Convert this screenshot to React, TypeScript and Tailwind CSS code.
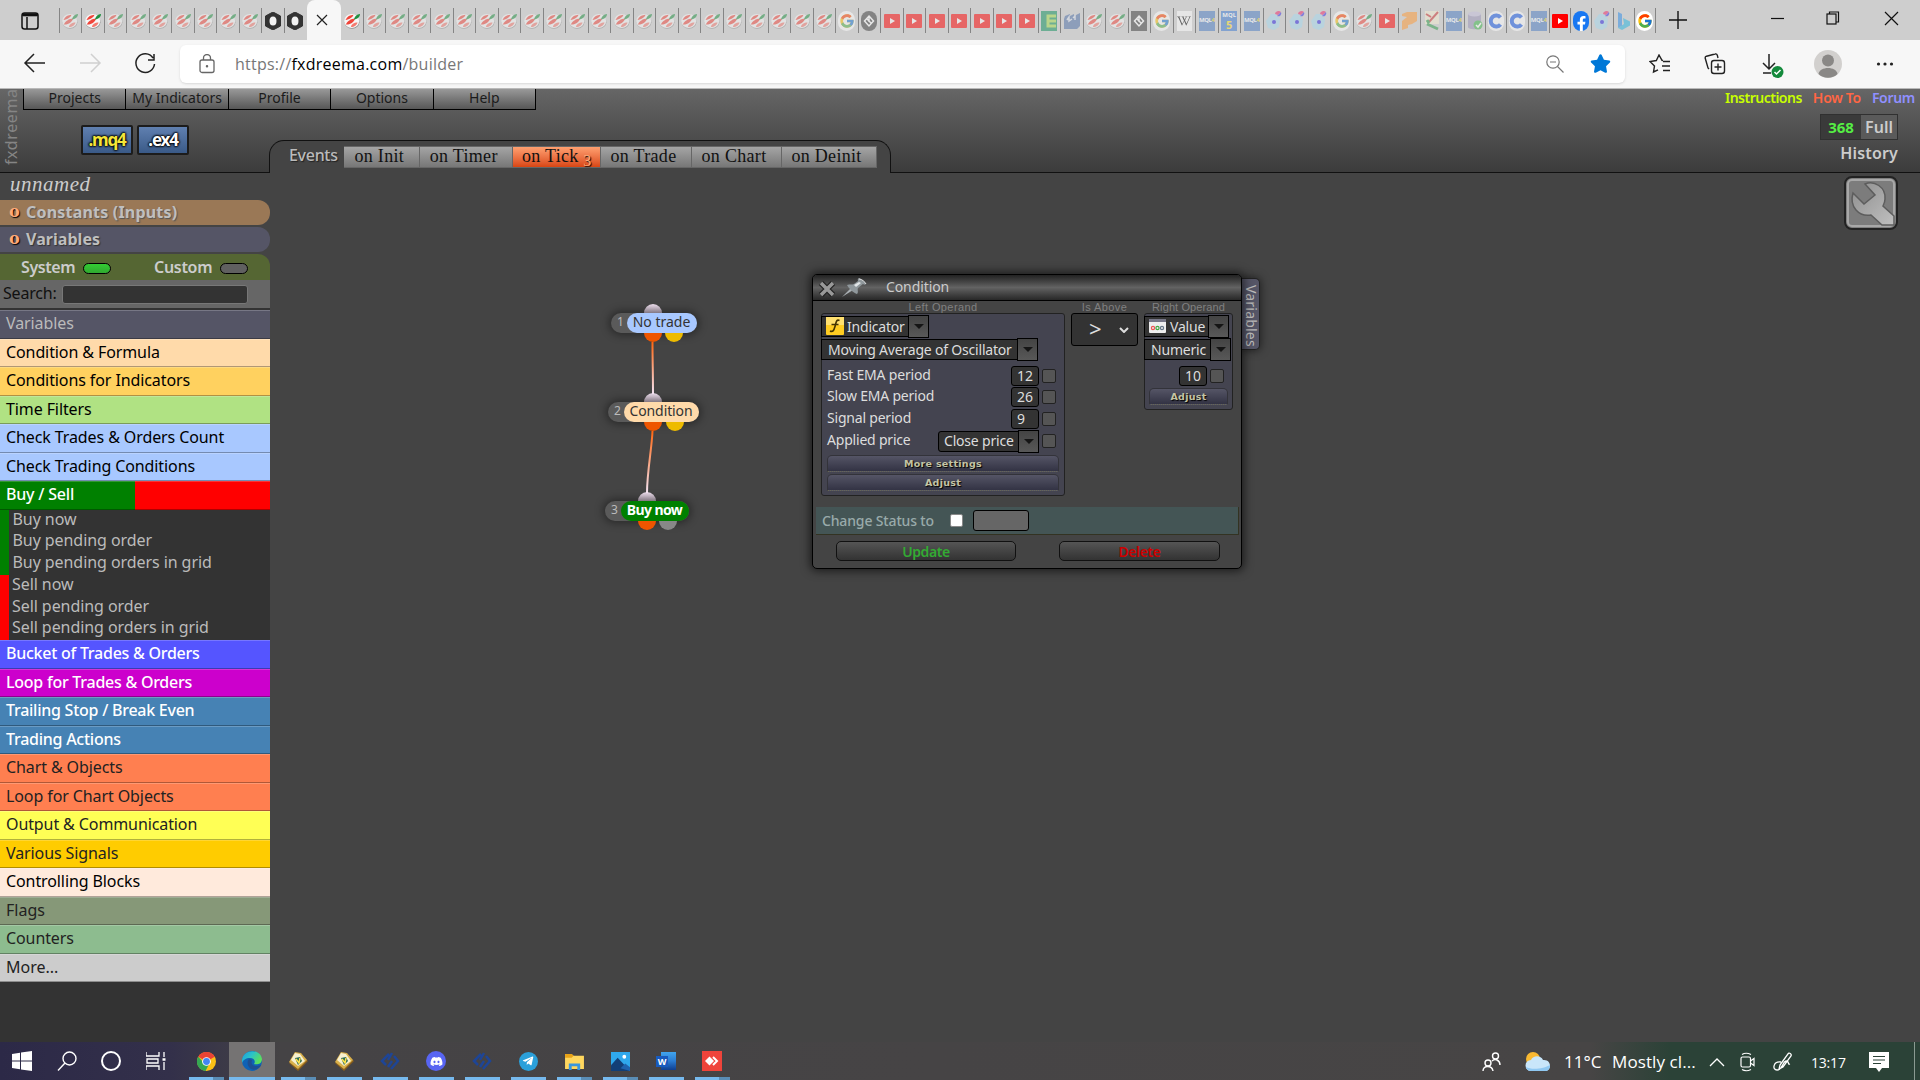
import { useState } from 'react';
import type { ReactNode } from 'react';
import clsx from 'clsx';
import { FcGoogle } from 'react-icons/fc';
import { FaDiscord, FaFacebookF, FaStar, FaTelegramPlane, FaWikipediaW } from 'react-icons/fa';

const rows = [
  { label: 'Variables', cls: 'bg-[#555566] text-[#bbbbbb]' },
  { label: 'Condition & Formula', cls: 'bg-[#ffdaaa] text-black' },
  { label: 'Conditions for Indicators', cls: 'bg-[#ffd15f] text-black' },
  { label: 'Time Filters', cls: 'bg-[#b0e283] text-black' },
  { label: 'Check Trades & Orders Count', cls: 'bg-[#a8c8ff] text-black' },
  { label: 'Check Trading Conditions', cls: 'bg-[#a8c8ff] text-black' },
];

const moreRows = [
  { label: 'Bucket of Trades & Orders', cls: 'bg-[#5555ff] text-white font-medium tracking-[-0.25px]' },
  { label: 'Loop for Trades & Orders', cls: 'bg-[#cc00cc] text-white font-medium tracking-[-0.25px]' },
  { label: 'Trailing Stop / Break Even', cls: 'bg-[#4682b4] text-white font-medium tracking-[-0.25px]' },
  { label: 'Trading Actions', cls: 'bg-[#4682b4] text-white font-medium tracking-[-0.25px]' },
  { label: 'Chart & Objects', cls: 'bg-[#ff7f50] text-[#222222] tracking-[-0.1px]' },
  { label: 'Loop for Chart Objects', cls: 'bg-[#ff7f50] text-[#222222] tracking-[-0.1px]' },
  { label: 'Output & Communication', cls: 'bg-[#ffff55] text-[#222222] tracking-[-0.1px]' },
  { label: 'Various Signals', cls: 'bg-[#ffcc00] text-[#222222] tracking-[-0.1px]' },
  { label: 'Controlling Blocks', cls: 'bg-[#ffeadc] text-black tracking-[-0.1px]' },
  { label: 'Flags', cls: 'bg-[#869878] text-[#222222]' },
  { label: 'Counters', cls: 'bg-[#8dbc8f] text-[#222222] tracking-[-0.1px]' },
  { label: 'More...', cls: 'bg-[#cccccc] text-[#222222]' },
];

const buyItems = ['Buy now', 'Buy pending order', 'Buy pending orders in grid'];
const sellItems = ['Sell now', 'Sell pending order', 'Sell pending orders in grid'];

const events = [
  { label: 'on Init', w: 'w-[75.5px]' },
  { label: 'on Timer', w: 'w-[93.5px]' },
  { label: 'on Tick', w: 'w-[87.5px]', count: 3 },
  { label: 'on Trade', w: 'w-[91px]' },
  { label: 'on Chart', w: 'w-[90px]' },
  { label: 'on Deinit', w: 'w-[95px]' },
];

// favicons of the open tabs; a trailing ! means the tab is awake
const leftTabs = 'fx fx! fx fx fx fx fx fx fx hex! hex!'.split(' ');
const midTabs = (
  'fx fx fx fx fx fx fx fx fx fx fx fx fx fx fx fx fx fx fx fx fx google circle yt yt yt yt yt yt yt e m fx fx square google ' +
  'wiki mql mql5 mql dot dot dot google fx yt arrow tools'
).split(' ');
const rightTabs = 'mql db c c mql yt! fb! dot bing google!'.split(' ');

function Favicon({ kind }: { kind: string }) {
  switch (kind) {
    case 'fx':
      return (
        <svg viewBox="0 0 16 16" className="size-4">
          <ellipse cx="8" cy="9.200" rx="7.400" ry="6.600" fill="#8c8c8c" />
          <ellipse cx="7.700" cy="8" rx="7.500" ry="7" fill="#f6f6f6" />
          <path d="M1.500 7C3 3.500 6 2 9.500 1.800 9 4 5.500 6.500 1.500 7z" fill="#f0453a" />
          <path d="M1.800 11.500C3 8.500 7 5.500 11 5.500 10.500 9 6 12 1.800 11.500z" fill="#f0453a" />
          <path d="M7 14c0-2.500 3-4.500 6.500-4.500C13 12 10 14.200 7 14z" fill="#f47a70" />
          <path d="M10 6.500C10.500 3.500 13 1.200 16 1c0 2.500-2 5-6 5.500z" fill="#1f9040" />
        </svg>
      );
    case 'hex':
      return (
        <svg viewBox="0 0 16 18" className="h-[18px] w-4">
          <path d="M8 0l7.500 4v10L8 18 .5 14V4z" fill="#333" stroke="#333" />
          <ellipse cx="8" cy="9" rx="3.500" ry="4.500" fill="#f2f2f2" />
        </svg>
      );
    case 'google':
      return (
        <span className="flex h-5 w-[17px] items-center justify-center rounded-full bg-white">
          <FcGoogle className="size-4" />
        </span>
      );
    case 'circle':
    case 'square':
      return (
        <svg viewBox="0 0 16 20" className="h-5 w-4">
          <rect width="16" height="20" rx={kind === 'circle' ? 8 : 0} fill="#3a3a3a" />
          <path d="M8 5l4.500 5L8 15l-4.500-5zM6 8l4 4M8 6v5" fill="none" stroke="#fff" strokeWidth="1.5" />
        </svg>
      );
    case 'yt':
      return (
        <svg viewBox="0 0 16 14" className="h-3.5 w-4">
          <rect width="16" height="14" rx="1" fill="#f00" />
          <path d="M6 4l5 3-5 3z" fill="#fff" />
        </svg>
      );
    case 'e':
      return (
        <svg viewBox="0 0 16 20" className="h-5 w-4">
          <rect width="16" height="20" fill="#0f8f5b" />
          <path d="M15 5H7v10h8M7 10h8" fill="none" stroke="#a5dc4a" strokeWidth="3" />
        </svg>
      );
    case 'm':
      return (
        <svg viewBox="0 0 16 16" className="size-4">
          <path d="M1 3l5-2v2l4-2v2l6-3v13l-3 3H0V6z" fill="#4e6fa8" />
          <path d="M3 7l2-3v4l3-2M9 5l2-2v4" stroke="#d7deea" fill="none" strokeWidth="1.500" />
        </svg>
      );
    case 'wiki':
      return (
        <span className="flex h-5 w-[15px] items-center justify-center bg-white text-black">
          <FaWikipediaW className="size-[14px]" />
        </span>
      );
    case 'mql':
      return (
        <span className="flex h-5 w-4 items-center justify-center bg-[#4a7cc4] text-[6px] font-bold tracking-[-0.4px] text-white">
          MQL<span className="text-yellow-300">4</span>
        </span>
      );
    case 'mql5':
      return (
        <span className="flex h-5 w-4 flex-col items-center bg-[#3a78d0] text-[6px] leading-[8px] font-bold text-white">
          <span>MQL</span>
          <span className="text-[11px] leading-[12px] text-yellow-300">5</span>
        </span>
      );
    case 'dot':
      return (
        <svg viewBox="0 0 16 20" className="h-5 w-4">
          <path d="M5 3h5l4 5-1 8-5 3-6-2-2-7z" fill="#a6d8ee" />
          <path d="M9 3a3.500 3 0 0 1 6-2l-3 3z" fill="#f0286a" />
          <path d="M15 1a3 3 0 0 1-4 4z" fill="#3a30e8" />
          <circle cx="8" cy="11" r="2" fill="#2a20e0" />
        </svg>
      );
    case 'arrow':
      return (
        <svg viewBox="0 0 16 18" className="h-[18px] w-4">
          <path d="M1 2L6 0h10v9l-5 3-4 1v3l-6 2V9l5-4-5-1z" fill="#ff9a35" />
        </svg>
      );
    case 'tools':
      return (
        <svg viewBox="0 0 16 20" className="h-5 w-4">
          <rect x="1" width="14" height="13" fill="#f4ecd0" />
          <path d="M2 3l5 3M14 1L5 11" stroke="#c33" strokeWidth="2" />
          <path d="M3 9l2 3M3 13l11 5" stroke="#2d9a48" strokeWidth="3" />
        </svg>
      );
    case 'db':
      return (
        <svg viewBox="0 0 16 20" className="h-5 w-4">
          <path d="M1 3v13c0 3 13 3 13 0V3z" fill="#9a94b8" />
          <ellipse cx="7.500" cy="3" rx="6.500" ry="2.500" fill="#c5c0dc" />
          <circle cx="11" cy="14" r="4.500" fill="#3db54a" />
          <path d="M9 14l2 2 3-4" stroke="#fff" fill="none" strokeWidth="1.500" />
        </svg>
      );
    case 'c':
      return (
        <svg viewBox="0 0 16 20" className="h-5 w-4">
          <rect width="16" height="20" rx="8" fill="#fff" />
          <path d="M12.500 6.500a5.500 5.500 0 1 0 0 7" fill="none" stroke="#1458e8" strokeWidth="4" />
        </svg>
      );
    case 'fb':
      return (
        <span className="flex h-5 w-4 items-end justify-center rounded-full bg-[#1877f2] text-white">
          <FaFacebookF className="size-[15px]" />
        </span>
      );
    default:
      return (
        <svg viewBox="0 0 16 20" className="h-5 w-4">
          <path d="M2 1l4 2v12l-4 2z" fill="#2a8be8" />
          <path d="M7 7l7 3.500v4L6 19l-4-2 6-4z" fill="#27b5e0" />
        </svg>
      );
  }
}

function TabIcon({ name, width }: { name: string; width: string }) {
  const awake = name.endsWith('!');
  return (
    <div className={clsx('flex h-[25px] shrink-0 items-center justify-center border-r', width)}>
      <span className={clsx('flex', !awake && 'opacity-50')}>
        <Favicon kind={name.replace('!', '')} />
      </span>
    </div>
  );
}

function TabStrip() {
  return (
    <div className="flex h-10 bg-[#cecece] pt-2">
      <div className="flex h-[25px] w-[59.5px] items-center justify-center border-r border-[#858585]">
        <svg viewBox="0 0 18 18" className="ml-[2px] size-[18px]" fill="none" stroke="#111" strokeWidth="1.5">
          <rect x="1" y="1" width="16" height="16" rx="2.500" />
          <path d="M1 3h16M6 5v12" strokeWidth="1.5" />
          <path d="M2 2.800h14" strokeWidth="3" />
        </svg>
      </div>
      {leftTabs.map((t, i) => (
        <TabIcon key={i} name={t} width={i === 10 ? 'w-[22.5px] border-transparent' : 'w-[22.5px] border-[#858585]'} />
      ))}
      <div className="-mt-2 flex h-10 w-[34px] items-center justify-center rounded-t-lg bg-[#f7f7f7] pr-[4px]">
        <svg viewBox="0 0 12 12" className="size-3" stroke="#222" strokeWidth="1.2">
          <path d="M1 1l10 10M11 1L1 11" />
        </svg>
      </div>
      <TabIcon name="fx!" width="w-[22.5px] border-[#858585]" />
      {midTabs.map((t, i) => (
        <TabIcon key={i} name={t} width="w-[22.5px] border-[#858585]" />
      ))}
      {rightTabs.map((t, i) => (
        <TabIcon key={i} name={t} width="w-[21.25px] border-[#858585]" />
      ))}
      <svg viewBox="0 0 18 18" className="mt-[3px] ml-[13px] size-[18px]" stroke="#111" strokeWidth="1.4">
        <path d="M9 0v18M0 9h18" />
      </svg>
      <svg viewBox="0 0 130 16" className="mt-[3px] ml-[84px] h-4 w-[130px]" fill="none" stroke="#111" strokeWidth="1.2">
        <path d="M0 7.500h13" />
        <rect x="56" y="3" width="9" height="10" />
        <path d="M58.500 3V1h9v10H65M114 1l13 13M127 1l-13 13" />
      </svg>
    </div>
  );
}

function AddressBar() {
  return (
    <div className="flex h-[49px] items-center border-b border-[#b9b9b9] bg-[#f7f7f7] pb-[1px]">
      <svg viewBox="0 0 180 48" className="h-12 w-[180px]" fill="none" stroke="#222" strokeWidth="1.5">
        <path d="M45 23H25.500M34 14l-9 9 9 9" />
        <path d="M80 23h19.500M91 14l9 9-9 9" stroke="#d0d0d0" />
        <path d="M153 18a9.300 9.300 0 1 0 1.500 6M154 14v6h-6" />
      </svg>
      <div className="flex h-[38px] flex-1 items-center rounded-md bg-white pl-[19px] shadow-sm">
        <svg viewBox="0 0 16 20" className="h-5 w-4" fill="none" stroke="#666" strokeWidth="1.300">
          <rect x="1" y="6" width="14" height="12.500" rx="2" />
          <path d="M4.500 6V4a3.500 3.500 0 0 1 7 0v2" />
          <circle cx="8" cy="12.300" r=".6" fill="#666" />
        </svg>
        <div className="ml-5 flex-1 font-['Open_Sans',sans-serif] text-[16px] tracking-[0.24px] whitespace-nowrap text-[#777]">
          https://<span className="text-black">fxdreema.com</span>/builder
        </div>
        <svg viewBox="0 0 18 18" className="mr-[26px] size-[18px]" fill="none" stroke="#777" strokeWidth="1.200">
          <circle cx="7" cy="7" r="6.200" />
          <path d="M4 7h6M11.500 11.500L17.500 17.500" />
        </svg>
        <FaStar className="mr-[14px] size-[21px] text-[#0078d7]" />
      </div>
      <div className="flex w-[295px] items-center">
        <svg viewBox="0 0 22 20" className="ml-[24px] h-5 w-[22px]" fill="none" stroke="#222" strokeWidth="1.400">
          <path d="M14 6.500l-1-.2L10 1 7.300 6.500 1 7.500l4.500 4.400L4.500 18l4.500-2.200M14 7.500h7M13 12h8M14 16.500h7" />
        </svg>
        <svg viewBox="0 0 22 22" className="ml-[33px] size-[22px]" fill="none" stroke="#222" strokeWidth="1.400">
          <rect x="7.500" y="7.500" width="13" height="13" rx="2.500" />
          <path d="M14 10.500v7M10.500 14h7M5 16l-1-1L1.300 5.500c-.3-1 .2-2 1.200-2.300L11 1c1-.3 2 .2 2.300 1.200L14 5" />
        </svg>
        <svg viewBox="0 0 24 26" className="mt-1 ml-[35px] h-[26px] w-6" fill="none" stroke="#222" strokeWidth="1.500">
          <path d="M8 1v15M2 10l6 6 6-6M2 20h8" />
          <circle cx="16.500" cy="19" r="6" fill="#148a3c" stroke="none" />
          <path d="M13.500 19l2 2 4-4" stroke="#fff" />
        </svg>
        <svg viewBox="0 0 28 28" className="ml-[29px] size-7">
          <circle cx="14" cy="14" r="14" fill="#d2d0ce" />
          <circle cx="14" cy="10.500" r="6" fill="#8a8886" />
          <path d="M4.500 24c1-8 18-8 19 0-5 5-14 5-19 0z" fill="#8a8886" />
        </svg>
        <svg viewBox="0 0 18 4" className="ml-[34px] h-1 w-[18px]" fill="#222">
          <circle cx="2.500" cy="2" r="1.600" />
          <circle cx="9" cy="2" r="1.600" />
          <circle cx="15.500" cy="2" r="1.600" />
        </svg>
      </div>
    </div>
  );
}

function Header() {
  return (
    <header className="flex h-[84px] shrink-0 border-b border-[#111] bg-gradient-to-b from-[#666666] to-[#3c3c3c]">
      <div className="w-[23px] rotate-180 pt-[7px] pr-[1px] text-[16px] leading-[20px] tracking-[0.6px] whitespace-nowrap text-[#858585] [writing-mode:vertical-rl]">
        fxdreema
      </div>
      <div className="w-[513px] shrink-0">
        <nav className="flex h-[21px] border-b border-l border-black text-[14px] text-black">
          {['Projects', 'My Indicators', 'Profile', 'Options', 'Help'].map((m) => (
            <button
              key={m}
              className="flex-1 border-r border-black bg-gradient-to-b from-[#999] to-[#575757] pb-1 leading-[18px] whitespace-nowrap text-[#1b1b1b]"
            >
              {m}
            </button>
          ))}
        </nav>
        <div className="mt-[15px] ml-[58px] flex gap-1 text-[17px] font-bold tracking-[-1.2px]">
          <button className="h-[30px] w-[52px] rounded-[2px] border-2 border-[#1c1c1c] bg-gradient-to-b from-[#6080b0] to-[#3a5a88] leading-[26px] text-[#f5e63a] [text-shadow:0_0_2px_#000,0_0_2px_#000,0_0_2px_#000,0_0_3px_#000]">
            .mq4
          </button>
          <button className="h-[30px] w-[52px] rounded-[2px] border-2 border-[#1c1c1c] bg-gradient-to-b from-[#6080b0] to-[#3a5a88] leading-[26px] text-white [text-shadow:0_0_2px_#000,0_0_2px_#000,0_0_2px_#000,0_0_3px_#000]">
            .ex4
          </button>
        </div>
      </div>
      <EventTabs />
      <div className="ml-auto flex flex-col items-end">
        <div className="flex gap-[11px] pr-[5px] text-[14px] leading-[18px] font-semibold tracking-[-0.5px]">
          <a className="text-[#c8ff00]">Instructions</a>
          <a className="tracking-[-0.3px] text-[#ff6644]">How To</a>
          <a className="tracking-[-0.3px] text-[#9090ff]">Forum</a>
        </div>
        <div className="mt-[7px] mr-[22px] flex h-[26px] w-[78px] border border-[#303030] text-[16px] leading-[24px] font-semibold">
          <span className="w-10 bg-[#3a3a3a] text-center text-[15px] font-bold text-[#55ee44]">368</span>
          <span className="flex-1 bg-[#5a5a5a] text-center text-[#cccccc]">Full</span>
        </div>
        <div className="mt-[2px] mr-[22px] text-[16px] leading-[22px] font-semibold tracking-[0.15px] text-[#cccccc]">History</div>
      </div>
    </header>
  );
}

function EventTabs() {
  const [active, setActive] = useState('on Tick');
  return (
    <div className="z-10 mt-[51px] -ml-[267px] flex h-[33px] w-[622px] shrink-0 rounded-t-[15px] border border-b-0 border-[#111] bg-[#444444] pt-[5px] pl-[19px]">
      <span className="w-[55px] text-[16px] leading-[18px] font-medium tracking-[-0.3px] text-[#bbbbbb] [text-shadow:1px_1px_1px_#222]">Events</span>
      <div className="flex h-[22px] font-['Liberation_Serif',serif] text-[18px] leading-[18px] tracking-[0.3px] text-[#111]">
        {events.map((e) => (
          <button
            key={e.label}
            onClick={() => setActive(e.label)}
            className={clsx(
              'relative shrink-0 border-y border-r border-[#666] pb-[2px] whitespace-nowrap',
              e.w,
              active === e.label ? 'bg-gradient-to-b from-[#ffa070] to-[#d84510] pr-3' : 'bg-gradient-to-b from-[#a5a5a5] to-[#777] pr-[4px]',
            )}
          >
            {e.label}
            {e.count && <sub className="absolute right-2 -bottom-[2px] text-[16px] leading-none text-[#ffaa77] [text-shadow:1px_1px_1px_#000]">{e.count}</sub>}
          </button>
        ))}
      </div>
    </div>
  );
}

function Category({ label, cls }: { label: string; cls: string }) {
  return (
    <div className={clsx('h-[28.5px] border-t border-b border-t-white/20 border-b-black/30 pl-1.5 leading-[25px] whitespace-nowrap', cls)}>
      {label}
    </div>
  );
}

function Sidebar() {
  return (
    <aside className="flex w-[270px] shrink-0 flex-col bg-[#333333] text-[16px]">
      <div className="h-[27px] bg-[#444444] pl-[10px] font-['Liberation_Serif',serif] text-[21px] leading-[22px] tracking-[0.5px] text-[#cccccc] italic">unnamed</div>
      <div className="bg-[#444444]">
        <div className="flex h-[25px] items-center rounded-r-xl bg-[#9a7856] pb-[2px] pl-[9px] font-bold text-[#bfbfbf] [text-shadow:1px_1px_1px_#555]">
          <span className="mr-[6px] w-[11px] font-['DejaVu_Serif',serif] text-[16px] leading-none text-[#ffaa77] [text-shadow:1px_1px_1px_#000]">o</span>
          <span className="tracking-[0.2px]">Constants (Inputs)</span>
        </div>
        <div className="mt-[2px] flex h-[25px] items-center rounded-r-xl bg-[#555566] pb-[2px] pl-[9px] font-bold text-[#bfbfbf] [text-shadow:1px_1px_1px_#333]">
          <span className="mr-[6px] w-[11px] font-['DejaVu_Serif',serif] text-[16px] leading-none text-[#ffaa77] [text-shadow:1px_1px_1px_#000]">o</span>
          <span className="tracking-[0.05px]">Variables</span>
        </div>
        <div className="mt-[2px] flex h-[26px] items-center rounded-tr-xl bg-[#556633] pl-[21px] font-semibold text-[#cccccc]">
          <span className="w-[62px] tracking-[-0.4px]">System</span>
          <span className="mt-[2px] h-[11px] w-7 rounded-md border border-black bg-gradient-to-b from-[#33cc33] to-[#30aa30]" />
          <span className="ml-[43px] w-[66px] tracking-[-0.3px]">Custom</span>
          <span className="mt-[2px] h-[11px] w-7 rounded-md border border-black bg-[#606060]" />
        </div>
      </div>
      <div className="flex h-[28px] items-center bg-[#666666] pl-[3px] text-[#111]">
        <span className="w-[58.5px] pb-[2px] tracking-[-0.2px]">Search:</span>
        <span className="h-[19px] w-[186px] rounded-[3px] border border-[#777] bg-[#333333]" />
      </div>
      <div className="mt-[2px] tracking-[-0.1px]">
        {rows.map((r) => (
          <Category key={r.label} {...r} />
        ))}
        <Category label="Buy / Sell" cls="bg-[linear-gradient(to_right,#008000_50%,#ff0000_50%)] text-white font-medium tracking-[-0.2px]" />
      </div>
      <div className="border-l-[9px] border-[#008000] pl-[3.5px] tracking-[-0.07px] text-[#bbbbbb]">
        {buyItems.map((b) => (
          <div key={b} className="h-[21.75px] leading-[18px] whitespace-nowrap">{b}</div>
        ))}
      </div>
      <div className="border-l-[9px] border-[#ff0000] pl-[3px] tracking-[-0.07px] text-[#bbbbbb]">
        {sellItems.map((s) => (
          <div key={s} className="h-[21.75px] leading-[18px] whitespace-nowrap">{s}</div>
        ))}
      </div>
      {moreRows.map((r) => (
        <Category key={r.label} {...r} />
      ))}
    </aside>
  );
}

type BlockProps = { n: number; label: string; place: string; pill: string; top: string; out: string; alt: string };

function Block({ n, label, place, pill, top, out, alt }: BlockProps) {
  return (
    <div className={clsx('absolute', place)}>
      <span className={clsx('absolute -top-[9px] h-[9px] w-[18px] rounded-t-full bg-gradient-to-b from-[#efe0ef] to-[#b3a4b3]', top)} />
      <span className={clsx('absolute top-5 z-20 h-[9px] w-[18px] rounded-b-full bg-[#ee5500]', out)} />
      <span className={clsx('absolute top-5 z-20 h-[9px] w-[18px] rounded-b-full', alt)} />
      <div className="relative z-10 flex h-5 rounded-full bg-[#5a5a5a] shadow-[0_0_8px_2px_rgba(0,0,0,0.4)]">
        <span className="w-[15.5px] pl-[6px] text-[12px] leading-[18px] text-[#bbbbbb]">{n}</span>
        <span className={clsx('h-5 rounded-full text-center text-[14px] leading-[17px] whitespace-nowrap', pill)}>{label}</span>
      </div>
    </div>
  );
}

function SelectBox({ children, width }: { children: ReactNode; width: string }) {
  return (
    <div className="flex items-center">
      <div className={clsx('flex h-[21px] items-center border border-black bg-[#333333] pb-px whitespace-nowrap text-[#dddddd]', width)}>{children}</div>
      <div className="-ml-px flex h-[23px] w-[21px] items-center justify-center border border-black bg-gradient-to-b from-[#444] to-[#585858]">
        <span className="border-x-[5px] border-t-[5px] border-x-transparent border-t-[#151515]" />
      </div>
    </div>
  );
}

function SmallButton({ children }: { children: string }) {
  return (
    <button className="h-[17px] w-full rounded-t-[5px] border border-[#33333a] border-b-[#666655] [border-bottom-style:dotted] bg-gradient-to-b from-[#555566] to-[#333344] font-['DejaVu_Sans',sans-serif] text-[9.5px] leading-[15px] font-bold tracking-[0.3px] text-[#c4c4a4] [text-shadow:1px_1px_1px_#000]">
      {children}
    </button>
  );
}

function Tick() {
  return <span className="ml-[3px] size-[14px] rounded-[2px] border border-[#222] bg-[#555555]" />;
}

function ParamRow({ label, value }: { label: string; value: string }) {
  return (
    <div className="flex h-[21.5px] items-center">
      <span className="flex-1 pb-[3px] whitespace-nowrap">{label}</span>
      <span className="h-[20px] w-7 rounded-[3px] border border-black bg-[#333333] pl-[5px] leading-[17px] tracking-normal">{value}</span>
      <Tick />
    </div>
  );
}

const caption = "h-[12px] text-center font-['Liberation_Sans',sans-serif] text-[11px] leading-[12px] text-[#808080] whitespace-nowrap";

function ConditionWindow() {
  return (
    <div className="absolute top-[101px] left-[542px] flex items-start">
      <div className="z-10 h-[295px] w-[430px] rounded-[5px] border border-black bg-[#444444] text-[14px] tracking-[-0.2px] text-[#dddddd] shadow-[0_0_10px_2px_rgba(0,0,0,0.6)]">
        <div className="flex h-[26px] items-center rounded-t border-b border-black bg-gradient-to-b from-[#222] via-[#636363] to-[#282828]">
          <svg viewBox="0 0 18 18" className="mt-[3px] ml-[5px] size-[18px]">
            <path d="M3 3l12 12M15 3L3 15" stroke="#222" strokeWidth="6" />
            <path d="M3 3l12 12M15 3L3 15" stroke="#999" strokeWidth="3.500" />
          </svg>
          <svg viewBox="0 0 26 20" className="ml-[5px] h-5 w-[26px]">
            <path d="M1 19l9-9 2 2z" fill="#aab0b4" />
            <path d="M6 7c3-1 5 0 7-1l4-3c0-1-1-2 1-3 2 1 7 4 7 6-1 1-2 1-3 0l-5 4c-1 2 1 4-1 6-3-1-8-5-10-9z" fill="#8f979b" />
            <path d="M13 7l5-3 2 1-5 4z" fill="#e2e6e8" />
            <path d="M18 1c3 0 6 3 7 5" stroke="#ddd" fill="none" />
          </svg>
          <span className="ml-[19px] pb-[2px] tracking-[-0.1px] text-[#cccccc]">Condition</span>
        </div>
        <div className="flex h-[206px] pl-[8px]">
          <div className="w-[244px]">
            <div className={clsx(caption, 'tracking-[0.4px]')}>Left Operand</div>
            <div className="h-[183px] rounded-[3px] border border-[#222] bg-[#444450]">
              <div className="-ml-px pt-px">
                <SelectBox width="w-[88px] pl-1">
                  <svg viewBox="0 0 18 18" className="mr-[3px] size-[18px] shrink-0">
                    <rect width="18" height="18" rx="1" fill="#ffcc22" />
                    <path d="M0 0h18v8H0z" fill="#ffe070" />
                    <path d="M13.500 3.500C10 2 10 6 9 9.500S7 15.500 4 14M5.500 7.500h7" fill="none" stroke="#443300" strokeWidth="1.600" />
                  </svg>
                  Indicator
                </SelectBox>
                <SelectBox width="w-[197px] pl-[6px]">Moving Average of Oscillator</SelectBox>
              </div>
              <div className="mt-[4px] pr-[8px] pl-[5px]">
                <ParamRow label="Fast EMA period" value="12" />
                <ParamRow label="Slow EMA period" value="26" />
                <ParamRow label="Signal period" value="9" />
                <div className="flex h-[23px] items-center">
                  <span className="flex-1 pb-[3px]">Applied price</span>
                  <SelectBox width="w-[81px] pl-[5px] rounded-l-[3px]">Close price</SelectBox>
                  <Tick />
                </div>
                <div className="mt-[2px] -mr-[3px] flex flex-col gap-[2px]">
                  <SmallButton>More settings</SmallButton>
                  <SmallButton>Adjust</SmallButton>
                </div>
              </div>
            </div>
          </div>
          <div className="ml-[6px] w-[67px]">
            <div className={clsx(caption, 'tracking-[0.4px]')}>Is Above</div>
            <div className="flex h-[33px] items-center rounded-[3px] border border-black bg-[#333333] pl-[17px] text-[22px]">
              <span className="pb-[3px] leading-none">&gt;</span>
              <svg viewBox="0 0 10 6" className="ml-[18px] h-[6px] w-[10px]" fill="none" stroke="#ddd" strokeWidth="2">
                <path d="M1 1l4 4 4-4" />
              </svg>
            </div>
          </div>
          <div className="ml-[6px] w-[89px]">
            <div className={clsx(caption, 'tracking-[0.1px]')}>Right Operand</div>
            <div className="h-[97px] rounded-[3px] border border-[#222] bg-[#444450]">
              <div className="-ml-px pt-px">
                <SelectBox width="w-[65px] pl-1">
                  <svg viewBox="0 0 17 14" className="mr-1 h-[14px] w-[17px] shrink-0">
                    <rect width="17" height="14" rx="1" fill="#eee" />
                    <rect width="17" height="3" fill="#778" />
                    <circle cx="4" cy="9" r="1.600" fill="none" stroke="#e55" strokeWidth="1.200" />
                    <circle cx="8.500" cy="9" r="1.600" fill="none" stroke="#4a4" strokeWidth="1.200" />
                    <circle cx="13" cy="9" r="1.600" fill="none" stroke="#678" strokeWidth="1.200" />
                  </svg>
                  Value
                </SelectBox>
                <SelectBox width="w-[67px] pl-[6px]">Numeric</SelectBox>
              </div>
              <div className="mt-[4px] pr-[8px] pl-[4px]">
                <ParamRow label="" value="10" />
                <div className="-mr-[4px] flex pt-px">
                  <SmallButton>Adjust</SmallButton>
                </div>
              </div>
            </div>
          </div>
        </div>
        <div className="mr-[2px] ml-[3px] flex h-[28px] items-center border-r border-b border-[#333322] bg-[#445555] pl-[6px] font-medium tracking-[-0.15px] text-[#99aaaa]">
          <span className="w-[128px] pb-px whitespace-nowrap">Change Status to</span>
          <span className="size-[13px] rounded-[2px] border border-[#888] bg-white" />
          <span className="ml-[10px] h-[21px] w-14 rounded-[3px] border border-black bg-[#666666]" />
        </div>
        <div className="mt-[6px] flex pl-[23px] font-semibold tracking-[-0.4px]">
          <button className="h-5 w-[180px] rounded-[5px] border border-[#111] bg-gradient-to-b from-[#555] to-[#333] leading-[17px] text-[#33aa33]">Update</button>
          <button className="ml-[43px] h-5 w-[161px] rounded-[5px] border border-[#111] bg-gradient-to-b from-[#555] to-[#333] leading-[17px] text-[#cc0000]">Delete</button>
        </div>
      </div>
      <div className="mt-[4px] h-[72px] w-[18px] rounded-r-[5px] border border-l-0 border-[#222] bg-[#555566] pt-[6px] text-[14px] leading-[16px] tracking-[0.2px] text-[#bbbbbb] shadow-[0_0_8px_1px_rgba(0,0,0,0.5)] [writing-mode:vertical-rl]">
        Variables
      </div>
    </div>
  );
}

function Canvas() {
  return (
    <main className="relative flex-1 bg-[#444444]">
      <Block n={1} label="No trade" place="top-[140px] left-[341px]" pill="w-[70px] bg-[#a8c8ff] text-[#333]" top="left-[33px]" out="left-[33px]" alt="left-[54px] bg-[#eebb00]" />
      <Block n={2} label="Condition" place="top-[229px] left-[338px]" pill="w-[75px] bg-[#ffdaaa] text-[#333] tracking-[-0.1px]" top="left-[36px]" out="left-[36px]" alt="left-[58px] bg-[#eebb00]" />
      <Block n={3} label="Buy now" place="top-[328px] left-[335px]" pill="w-[68px] bg-[#008000] text-white font-bold tracking-[-0.6px]" top="left-[33px]" out="left-[33px]" alt="left-[54px] bg-[#888888]" />
      <svg viewBox="0 0 200 260" className="absolute top-[129px] left-[300px] z-20 h-[260px] w-[200px]" fill="none" strokeWidth="2">
        <defs>
          <linearGradient id="l1" gradientUnits="userSpaceOnUse" x1="83" y1="40" x2="83" y2="92">
            <stop stopColor="#ff6611" />
            <stop offset="1" stopColor="#f4e4f4" />
          </linearGradient>
          <linearGradient id="l2" gradientUnits="userSpaceOnUse" x1="83" y1="129" x2="77" y2="191">
            <stop stopColor="#ff6611" />
            <stop offset="1" stopColor="#f4e4f4" />
          </linearGradient>
        </defs>
        <path d="M82.500 40C82.500 60 83 70 83 92" stroke="url(#l1)" />
        <path d="M82.500 129C82 145 77 170 77 191" stroke="url(#l2)" />
      </svg>
      <ConditionWindow />
      <div className="absolute top-[3px] right-[22px] size-[54px] rounded-lg border-2 border-[#222] bg-[#808080] p-px">
        <svg viewBox="0 0 48 48" className="size-full">
          <defs>
            <linearGradient id="metal" x1="0" y1="0" x2="1" y2="1">
              <stop stopColor="#8e8e8e" />
              <stop offset="1" stopColor="#c0c0c0" />
            </linearGradient>
          </defs>
          <rect x="1" y="1" width="46" height="46" rx="4" fill="#7c7c7c" stroke="#a8a8a8" strokeWidth="2" />
          <path d="M6 14l11 11 11-9L18 5c9-4 21 3 20 15 0 3-1 5-2 7l11 10v9H35L24 36C12 38 2 28 6 14z" fill="url(#metal)" stroke="#5d5d5d" strokeWidth="1.500" />
        </svg>
      </div>
    </main>
  );
}

type TaskIconProps = { children: ReactNode; line?: 'none' | 'full' | 'stack'; active?: boolean };

function TaskIcon({ children, line = 'full', active }: TaskIconProps) {
  return (
    <div className={clsx('flex h-[38px] flex-col items-center', line === 'none' ? 'w-[44.900px] pr-[1.500px]' : 'w-[46px]', active && 'bg-[#757373]')}>
      <div className="flex h-[35px] items-center pt-[3px]">{children}</div>
      {line !== 'none' && (
        <div className={clsx('flex h-[3px]', active ? 'w-full' : 'w-[35px]')}>
          <span className="flex-1 bg-[#76b9ed]" />
          {line === 'stack' && <span className="w-[11px] bg-[#5a8db5]" />}
        </div>
      )}
    </div>
  );
}

function MetaTrader() {
  return (
    <svg viewBox="0 0 20 20" className="size-5">
      <path d="M1 12L11 3l9 7-10 10z" fill="#8a5f1c" />
      <path d="M1 11L7 1l6 1 6 7-9 9z" fill="#d9b04a" />
      <path d="M3 9l4-7 5 1 5 7-7 5z" fill="#f7f0cf" />
      <path d="M7 7l5-1 2 4-4 4z" fill="#2b6a55" />
      <path d="M8 8l3 4 1-5" stroke="#ffe24a" fill="none" strokeWidth="1.500" />
    </svg>
  );
}

function BlueDiamond() {
  return (
    <svg viewBox="0 0 20 18" className="h-[18px] w-5" fill="none" stroke="#1e4596" strokeWidth="2.500">
      <path d="M9 2L2 9l4 4M12 1l-4 7M11 17l7-8-4-5M12 9l-4 6" />
    </svg>
  );
}

function Taskbar() {
  return (
    <footer className="flex h-[38px] shrink-0 bg-[linear-gradient(to_right,#2c2947_0px,#33304a_170px,#454345_280px,#474545_1590px,#2b4237_1670px,#2b4237_1920px)] font-['Open_Sans',sans-serif] text-white">
      <div className="flex w-[183px]">
        <TaskIcon line="none">
          <svg viewBox="0 0 20 20" className="size-5" fill="#fff">
            <path d="M0 3l8-1.200v7.700H0zM9 1.600L20 0v9.500H9zM0 10.500h8v7.700L0 17zM9 10.500h11V20L9 18.400z" />
          </svg>
        </TaskIcon>
        <TaskIcon line="none">
          <svg viewBox="0 0 20 20" className="size-5" fill="none" stroke="#fff" strokeWidth="1.400">
            <circle cx="12.500" cy="7.500" r="6.500" />
            <path d="M8 12L1 19.500" />
          </svg>
        </TaskIcon>
        <TaskIcon line="none">
          <span className="size-5 rounded-full border-[2.5px] border-white" />
        </TaskIcon>
        <TaskIcon line="none">
          <svg viewBox="0 0 20 18" className="h-[18px] w-5" fill="none" stroke="#fff" strokeWidth="1.300">
            <path d="M0 0v4h13V0M0 18v-4h13v4M1 7h11v4H1zM18 0v5M18 10v8" />
            <path d="M16.500 7.500h3" strokeWidth="2.500" />
          </svg>
        </TaskIcon>
      </div>
      <TaskIcon line="stack">
        <svg viewBox="0 0 20 20" className="size-[19px]">
          <circle cx="10" cy="10" r="10" fill="#fbc116" />
          <path d="M10 10L1.300 5A10 10 0 0 1 18.700 5z" fill="#ea4335" />
          <path d="M1.300 5A10 10 0 0 0 9 20l4-8-6-1z" fill="#34a853" />
          <circle cx="10" cy="10" r="4.600" fill="#fff" />
          <circle cx="10" cy="10" r="3.600" fill="#4285f4" />
        </svg>
      </TaskIcon>
      <TaskIcon active>
        <svg viewBox="0 0 20 20" className="size-5">
          <defs>
            <linearGradient id="edge" x1="0" y1="0" x2="1" y2="0.500">
              <stop stopColor="#1a9be0" />
              <stop offset="0.500" stopColor="#2bc3c8" />
              <stop offset="1" stopColor="#5be05b" />
            </linearGradient>
          </defs>
          <circle cx="10" cy="10" r="10" fill="#0f62b5" />
          <path d="M0 9C1-2 18-3 20 8c0 5-5 6-8 5 2-3 0-6-4-6-4 0-7 2-8 5z" fill="url(#edge)" />
          <path d="M7 8c-4 5 1 13 8 10 2-1 4-3 4-4-4 2-8 1-9-1-1-2 0-3 0-4z" fill="#1d4f92" />
        </svg>
      </TaskIcon>
      <TaskIcon line="stack">
        <MetaTrader />
      </TaskIcon>
      <TaskIcon>
        <MetaTrader />
      </TaskIcon>
      <TaskIcon>
        <BlueDiamond />
      </TaskIcon>
      <TaskIcon>
        <span className="flex size-5 items-center justify-center rounded-full bg-[#5865f2]">
          <FaDiscord className="size-[13px]" />
        </span>
      </TaskIcon>
      <TaskIcon>
        <BlueDiamond />
      </TaskIcon>
      <TaskIcon>
        <span className="flex size-[19px] items-center justify-center rounded-full bg-[#2ba0da]">
          <FaTelegramPlane className="size-3" />
        </span>
      </TaskIcon>
      <TaskIcon line="stack">
        <svg viewBox="0 0 20 18" className="h-[17px] w-[19px]">
          <path d="M0 1h7l2 2h11v14H0z" fill="#ffd75e" />
          <path d="M0 1h7l2 2-2 2H0z" fill="#e8a317" />
          <path d="M4 18v-7h12v7h-3v-4H7v4z" fill="#3a96dd" />
        </svg>
      </TaskIcon>
      <TaskIcon line="stack">
        <svg viewBox="0 0 20 20" className="size-[19px]">
          <rect width="20" height="20" fill="#2fa8ec" />
          <path d="M0 14l7-8 13 14H0z" fill="#123f77" />
          <path d="M10 17l5-5 5 4v4z" fill="#1e62ad" />
          <circle cx="14" cy="5" r="2" fill="#fff" />
        </svg>
      </TaskIcon>
      <TaskIcon>
        <span className="relative flex h-[18px] w-5 justify-end">
          <span className="h-full w-[15px] bg-gradient-to-b from-[#41a5ee] via-[#2b7cd3] to-[#103f91]" />
          <b className="absolute top-[4px] left-0 h-[11px] w-3 bg-[#185abd] text-center text-[9px] leading-[11px]">W</b>
        </span>
      </TaskIcon>
      <TaskIcon line="stack">
        <svg viewBox="0 0 20 20" className="size-5">
          <rect width="20" height="20" fill="#ef443b" />
          <path d="M7.500 5.500L12 10l-4.500 4.500L3 10z" fill="#fff" />
          <path d="M11 6l4 4-4 4" fill="none" stroke="#fff" strokeWidth="2" />
        </svg>
      </TaskIcon>
      <div className="ml-auto flex items-center pt-[2px]">
        <svg viewBox="0 0 20 20" className="mr-[23px] size-5" fill="none" stroke="#fff" strokeWidth="1.400">
          <circle cx="13.500" cy="4" r="3" />
          <circle cx="6" cy="11" r="3" />
          <path d="M1 19c0-6 9-6 10 0M10 9c3-3 8-1 8 4" />
        </svg>
        <svg viewBox="0 0 26 20" className="mr-px h-5 w-[26px]">
          <circle cx="8" cy="7" r="7" fill="#f9b931" />
          <path d="M6 19a5.500 5.500 0 0 1 0-11c2-5 10-5 12 0 9-1 9 11 2 11z" fill="#c9e6fa" />
          <path d="M6 19c-3 0-5-2-5-4 5 3 18 2 24-2 0 4-2 6-5 6z" fill="#8fc8f2" />
        </svg>
        <span className="ml-[12px] w-[48px] text-[17px] whitespace-nowrap">11°C</span>
        <span className="w-[85px] text-[17px] tracking-[0.1px] whitespace-nowrap">Mostly cl...</span>
        <svg viewBox="0 0 16 9" className="ml-[12px] h-[9px] w-4" fill="none" stroke="#fff" strokeWidth="1.300">
          <path d="M1 8l7-7 7 7" />
        </svg>
        <svg viewBox="0 0 16 20" className="ml-[15px] h-5 w-4" fill="none" stroke="#fff" strokeWidth="1.200">
          <rect x="1" y="5" width="9.500" height="10" rx="1.500" />
          <path d="M10.500 9l3.500-2.500v7L10.500 11M2 2.500Q6 0 11 2.500M2 17.500Q6 20 11 17.500" />
        </svg>
        <svg viewBox="0 0 20 20" className="ml-[17px] size-5" fill="none" stroke="#fff" strokeWidth="1.300">
          <path d="M7 13L15 2c1-2 4 0 3 2l-8 11-4 2zM8 10c-8-1-9 8-4 8 6 0 5-8 9-9 4 0 1 4 4 3" />
        </svg>
        <span className="ml-[18px] w-[58px] text-[14px] tracking-[-0.2px]">13:17</span>
        <svg viewBox="0 0 20 20" className="size-5">
          <path d="M0 0h20v16h-7l-3 4-3-4H0z" fill="#fff" />
          <path d="M4 4.500h12M4 8h12M4 11.500h8" stroke="#2b4237" strokeWidth="1.200" />
        </svg>
        <span className="-mt-[2px] mr-[5px] ml-[25px] h-[38px] w-px bg-[#8a9a91]" />
      </div>
    </footer>
  );
}

export default function App() {
  return (
    <div className="flex h-[1080px] w-[1920px] flex-col overflow-hidden bg-[#444444] font-['Noto_Sans',sans-serif]">
      <TabStrip />
      <AddressBar />
      <Header />
      <div className="flex min-h-0 flex-1">
        <Sidebar />
        <Canvas />
      </div>
      <Taskbar />
    </div>
  );
}
